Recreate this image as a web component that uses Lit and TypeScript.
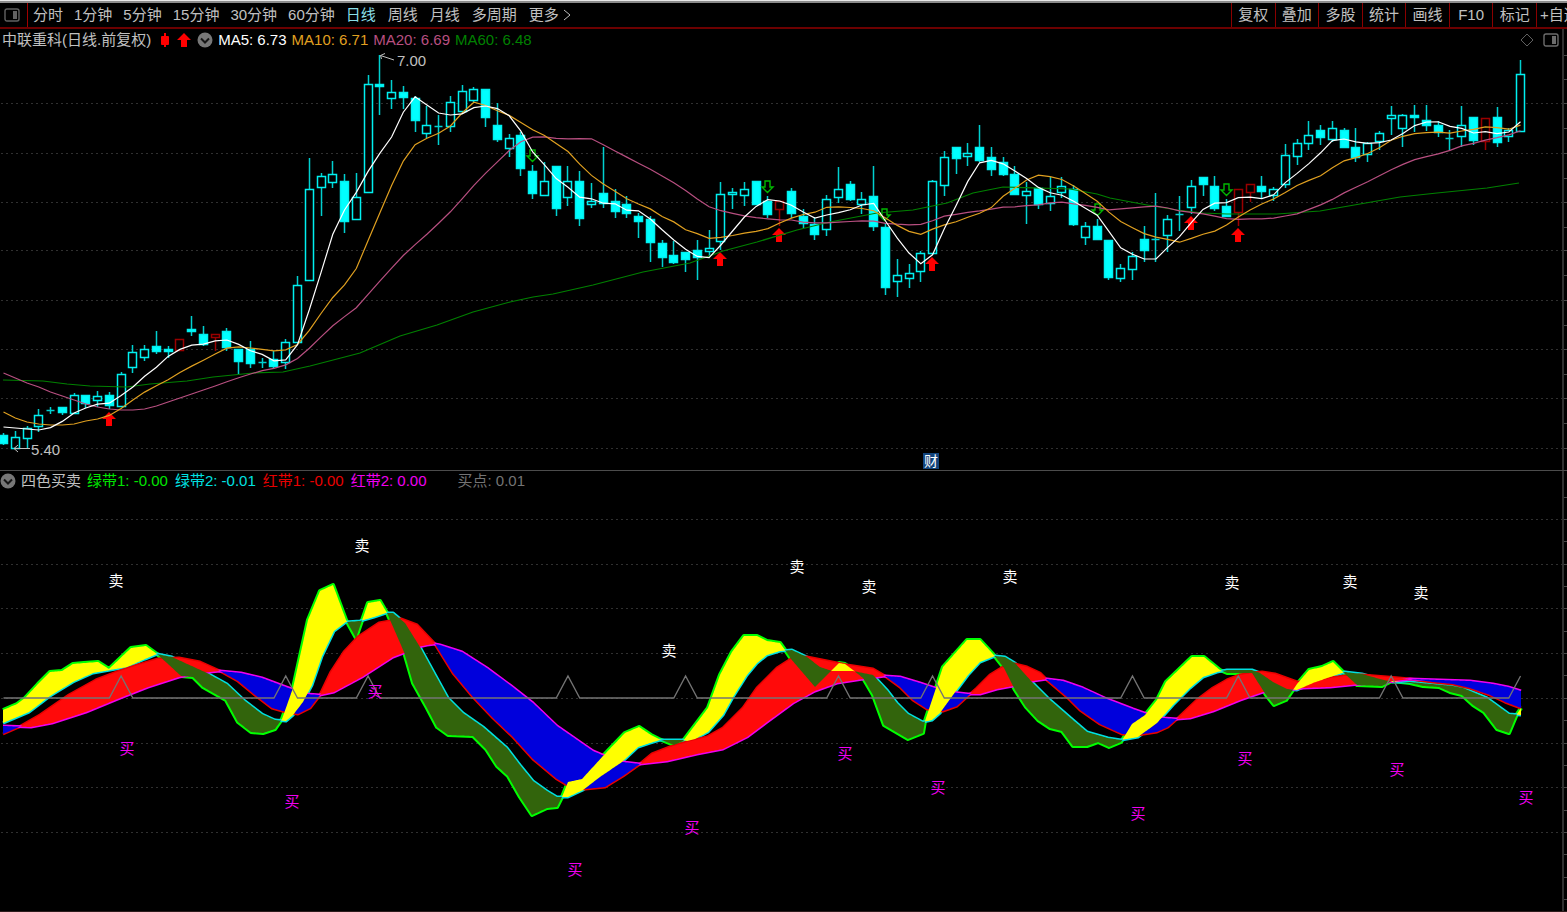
import { LitElement, html, svg, css } from "lit";
import { customElement, property, state } from "lit/decorators.js";

type Pt = [number, number];
type Kind = "u" | "d" | "r" | "c";
// high, body top, body bottom, low, kind (u rising, d falling, r signal, c doji)
type Candle = [number, number, number, number, Kind];

const X0 = 3.5;
const STEP = 11.76;
const xAt = (i: number) => X0 + i * STEP;
const snap = (v: number) => Math.round(v - 0.5) + 0.5;

const CANDLES: Candle[] = [
  [433, 435, 443, 445, "d"], [431, 437, 448, 448, "u"], [426, 428, 438, 448, "u"], [409, 415, 426, 432, "u"],
  [407, 410, 410, 414, "c"], [407, 407, 412, 415, "d"], [393, 395, 413, 414, "u"], [395, 395, 403, 408, "d"],
  [391, 396, 400, 407, "u"], [392, 395, 405, 409, "d"], [372, 374, 406, 407, "u"], [345, 352, 367, 373, "u"],
  [345, 349, 357, 361, "u"], [331, 346, 351, 354, "d"], [346, 349, 351, 358, "d"], [339, 339, 350, 350, "r"],
  [316, 329, 331, 336, "d"], [326, 334, 344, 346, "d"], [334, 334, 337, 351, "r"], [328, 331, 347, 351, "d"],
  [349, 349, 361, 374, "d"], [341, 349, 363, 368, "d"], [358, 362, 362, 368, "c"], [351, 359, 366, 368, "d"],
  [339, 342, 362, 369, "u"], [276, 285, 342, 342, "u"], [158, 189, 280, 280, "u"], [173, 176, 187, 216, "u"],
  [161, 174, 182, 188, "u"], [174, 181, 221, 233, "d"], [173, 197, 219, 219, "u"], [75, 84, 192, 193, "u"],
  [55, 84, 86, 115, "d"], [80, 92, 98, 109, "u"], [86, 92, 97, 109, "d"], [96, 98, 120, 132, "d"],
  [106, 125, 133, 138, "u"], [115, 126, 126, 145, "c"], [96, 102, 126, 132, "u"], [85, 91, 111, 112, "u"],
  [87, 89, 100, 102, "u"], [89, 89, 117, 127, "d"], [103, 125, 139, 142, "d"], [134, 138, 148, 157, "u"],
  [132, 135, 168, 176, "d"], [165, 171, 193, 199, "d"], [162, 181, 195, 196, "u"], [166, 166, 208, 216, "d"],
  [166, 181, 197, 206, "u"], [171, 181, 218, 226, "d"], [183, 201, 204, 208, "u"], [147, 193, 203, 208, "d"],
  [189, 201, 211, 218, "d"], [196, 204, 213, 218, "d"], [213, 216, 221, 238, "d"], [216, 219, 242, 262, "d"],
  [240, 243, 257, 267, "d"], [241, 255, 262, 264, "d"], [252, 252, 259, 272, "d"], [240, 250, 257, 280, "d"],
  [230, 248, 251, 256, "u"], [182, 194, 241, 250, "u"], [188, 192, 194, 209, "u"], [182, 189, 195, 206, "u"],
  [181, 181, 204, 204, "d"], [196, 201, 214, 218, "d"], [201, 201, 209, 226, "r"], [188, 191, 213, 218, "d"],
  [209, 216, 223, 228, "d"], [217, 224, 234, 240, "d"], [195, 199, 229, 236, "u"], [167, 189, 197, 203, "u"],
  [181, 184, 199, 201, "d"], [192, 199, 204, 214, "u"], [166, 196, 226, 231, "d"], [223, 227, 287, 295, "d"],
  [259, 275, 281, 297, "u"], [264, 273, 278, 288, "u"], [251, 253, 271, 282, "u"], [180, 181, 253, 255, "u"],
  [151, 157, 185, 196, "u"], [147, 147, 158, 174, "d"], [143, 153, 156, 166, "u"], [125, 147, 160, 162, "d"],
  [147, 157, 169, 176, "d"], [157, 162, 174, 176, "d"], [166, 174, 194, 194, "d"], [182, 191, 195, 224, "u"],
  [188, 188, 204, 209, "d"], [177, 196, 203, 211, "u"], [177, 186, 192, 198, "u"], [185, 189, 224, 226, "d"],
  [222, 226, 237, 245, "u"], [219, 226, 239, 239, "d"], [240, 240, 277, 280, "d"], [264, 268, 278, 282, "u"],
  [252, 256, 269, 280, "u"], [226, 239, 250, 262, "d"], [193, 239, 239, 262, "c"], [215, 219, 235, 252, "u"],
  [196, 214, 214, 231, "c"], [180, 186, 207, 214, "u"], [177, 177, 184, 196, "d"], [176, 186, 208, 211, "d"],
  [199, 206, 216, 217, "d"], [189, 189, 212, 226, "r"], [184, 184, 192, 202, "r"], [176, 186, 191, 198, "d"],
  [187, 189, 195, 201, "u"], [144, 155, 184, 188, "u"], [139, 143, 156, 165, "u"], [121, 135, 143, 150, "u"],
  [125, 130, 137, 145, "d"], [121, 128, 139, 142, "u"], [128, 130, 147, 147, "d"], [128, 147, 157, 162, "d"],
  [142, 143, 154, 162, "u"], [131, 133, 141, 150, "u"], [106, 115, 118, 135, "u"], [114, 115, 128, 147, "u"],
  [105, 115, 117, 132, "d"], [105, 120, 125, 131, "d"], [121, 125, 132, 137, "d"], [130, 138, 138, 150, "c"],
  [106, 125, 136, 147, "u"], [117, 117, 140, 145, "d"], [118, 118, 141, 150, "r"], [107, 117, 142, 147, "d"],
  [128, 130, 136, 142, "u"], [60, 74, 131, 132, "u"],
];

const closes = CANDLES.map((c) => (c[4] === "d" ? c[2] : c[1]));

/** Moving average over the closes, with seed values for the days before the window is full. */
function average(n: number, seed: number[]): string {
  const pts: string[] = [];
  for (let i = 0; i < closes.length; i++) {
    const y = i < seed.length ? seed[i] : closes.slice(i - n + 1, i + 1).reduce((a, b) => a + b, 0) / n;
    pts.push(`${xAt(i).toFixed(1)},${(y + 1).toFixed(1)}`);
  }
  return pts.join(" ");
}

const MA5 = average(5, [426, 427, 428, 429]);
const MA10 = average(10, [411, 417, 421, 423, 424, 424, 423, 420, 418]);
const MA20 = average(20, [372, 377, 382, 386, 391, 395, 399, 403, 406, 408, 409, 409, 408, 405, 401, 397, 393, 389, 385]);
const MA60: Pt[] = [
  [3, 380], [43, 381], [67, 384], [90, 386], [127, 387], [150, 384], [187, 381], [213, 377], [253, 373], [283, 372],
  [310, 366], [337, 359], [360, 353], [400, 336], [437, 325], [473, 312], [510, 302], [533, 297], [553, 294],
  [593, 285], [643, 272], [690, 263], [723, 251], [757, 242], [797, 230], [830, 222], [877, 213], [913, 210],
  [947, 203], [973, 193], [1003, 187], [1070, 189], [1097, 194], [1110, 198], [1147, 205], [1177, 210], [1203, 213],
  [1227, 214], [1277, 214], [1320, 211], [1360, 204], [1400, 197], [1437, 193], [1487, 188], [1519, 183],
];

const G1: Pt[] = [
  [3, 710], [17, 704], [25, 698], [38, 684], [50, 672], [62, 671], [73, 664], [84, 663], [98, 662], [109, 669],
  [131, 648], [146, 646], [157, 654], [168, 664], [181, 676], [193, 677], [203, 687], [226, 700], [238, 722],
  [251, 732], [263, 733], [275, 729], [282, 719], [293, 688], [308, 620], [320, 591], [333, 585], [346, 620],
  [356, 638], [368, 603], [380, 601], [387, 613], [404, 652], [413, 683], [427, 708], [437, 727], [448, 735],
  [473, 736], [486, 749], [497, 766], [508, 776], [520, 797], [532, 815], [547, 808], [557, 807], [562, 797],
  [568, 782], [582, 779], [603, 756], [625, 733], [639, 727], [651, 735], [659, 739], [674, 745], [683, 741],
  [708, 708], [720, 675], [732, 652], [744, 636], [757, 636], [767, 641], [780, 643], [785, 650], [791, 659],
  [815, 687], [827, 675], [839, 663], [845, 664], [853, 670], [863, 678], [873, 695], [884, 725], [908, 739],
  [923, 733], [925, 721], [932, 700], [943, 667], [967, 640], [980, 640], [993, 654], [1004, 668], [1015, 690],
  [1026, 707], [1038, 720], [1050, 728], [1062, 731], [1073, 746], [1087, 746], [1098, 742], [1109, 747],
  [1121, 742], [1132, 724], [1145, 715], [1157, 700], [1166, 682], [1192, 657], [1204, 657], [1220, 670],
  [1227, 673], [1252, 673], [1266, 695], [1274, 705], [1286, 700], [1297, 684], [1309, 670], [1322, 667],
  [1333, 662], [1345, 674], [1357, 685], [1382, 686], [1392, 681], [1410, 683], [1423, 686], [1439, 687],
  [1450, 692], [1462, 695], [1473, 705], [1484, 712], [1497, 729], [1509, 733], [1517, 714], [1521, 708],
];
const G2: Pt[] = [
  [3, 723], [29, 712], [50, 696], [73, 682], [93, 673], [110, 670], [127, 667], [145, 659], [157, 654], [172, 657],
  [207, 673], [227, 684], [245, 701], [262, 714], [275, 720], [286, 721], [293, 715], [303, 702], [312, 685],
  [322, 656], [334, 631], [346, 622], [360, 621], [374, 617], [386, 613], [393, 613], [405, 623], [420, 647],
  [437, 678], [448, 698], [463, 713], [483, 727], [507, 748], [520, 765], [533, 781], [547, 791], [557, 797],
  [568, 797], [583, 790], [600, 777], [622, 762], [638, 747], [650, 743], [660, 740], [683, 740], [687, 741],
  [695, 739], [708, 732], [723, 715], [733, 697], [747, 675], [757, 663], [767, 655], [780, 651], [792, 650],
  [807, 657], [820, 667], [832, 671], [853, 671], [873, 675], [887, 690], [897, 703], [908, 714], [923, 722],
  [932, 720], [940, 713], [953, 695], [968, 675], [980, 662], [995, 656], [1005, 657], [1015, 663], [1032, 682],
  [1050, 700], [1073, 720], [1087, 732], [1108, 738], [1121, 740], [1138, 737], [1157, 723], [1173, 705],
  [1190, 688], [1203, 677], [1217, 672], [1227, 670], [1252, 670], [1260, 673], [1273, 682], [1287, 689],
  [1297, 690], [1313, 683], [1333, 676], [1345, 672], [1362, 674], [1380, 679], [1393, 682], [1410, 682],
  [1453, 686], [1463, 688], [1487, 698], [1509, 714], [1521, 715],
];
const R1: Pt[] = [
  [3, 734], [19, 727], [40, 715], [69, 695], [96, 680], [117, 672], [138, 665], [158, 659], [179, 658], [200, 662],
  [220, 671], [238, 681], [255, 695], [272, 708], [286, 712], [298, 714], [310, 708], [320, 695], [331, 672],
  [344, 652], [358, 637], [379, 623], [401, 619], [417, 625], [435, 644], [453, 673], [473, 697], [493, 718],
  [513, 737], [533, 759], [557, 779], [567, 785], [585, 789], [605, 787], [623, 776], [640, 764], [652, 754],
  [670, 747], [687, 742], [707, 737], [723, 728], [743, 708], [757, 688], [777, 668], [791, 659], [807, 657],
  [827, 661], [847, 665], [873, 669], [885, 676], [900, 687], [913, 700], [927, 709], [943, 711], [957, 706],
  [968, 696], [977, 688], [990, 675], [1003, 667], [1015, 664], [1027, 667], [1040, 673], [1047, 680],
  [1067, 697], [1080, 710], [1100, 724], [1122, 734], [1137, 735], [1157, 732], [1168, 727], [1177, 719],
  [1197, 700], [1213, 688], [1227, 680], [1240, 675], [1252, 673], [1262, 672], [1275, 674], [1297, 682],
  [1313, 682], [1330, 678], [1345, 676], [1362, 675], [1387, 677], [1410, 679], [1433, 682], [1453, 684],
  [1470, 688], [1490, 695], [1505, 702], [1521, 708],
];
const R2: Pt[] = [
  [3, 726], [31, 727], [52, 723], [86, 712], [120, 698], [148, 687], [179, 677], [200, 673], [220, 671],
  [241, 673], [262, 678], [286, 687], [306, 694], [320, 695], [334, 692], [362, 677], [393, 657], [406, 652],
  [418, 647], [427, 645], [435, 644], [440, 645], [462, 652], [487, 668], [510, 685], [533, 703], [557, 726],
  [580, 742], [593, 751], [607, 757], [623, 762], [640, 764], [667, 761], [697, 754], [723, 749], [747, 737],
  [767, 722], [793, 703], [815, 691], [837, 683], [863, 679], [885, 676], [900, 677], [920, 683], [935, 688],
  [950, 692], [968, 694], [980, 694], [997, 689], [1013, 686], [1033, 681], [1047, 679], [1063, 681],
  [1083, 688], [1107, 699], [1133, 709], [1147, 714], [1163, 718], [1177, 719], [1190, 718], [1213, 711],
  [1240, 700], [1263, 692], [1280, 691], [1303, 688], [1330, 687], [1360, 684], [1387, 682], [1410, 679],
  [1440, 680], [1470, 681], [1493, 684], [1508, 687], [1521, 691],
];

function sample(line: Pt[]): number[] {
  const out: number[] = [];
  let k = 0;
  for (let x = 3; x <= 1521; x++) {
    while (k < line.length - 2 && line[k + 1][0] < x) k++;
    const [xa, ya] = line[k];
    const [xb, yb] = line[k + 1];
    out.push(ya + ((yb - ya) * (x - xa)) / (xb - xa));
  }
  return out;
}

/** Area between two lines, only where the first lies on the side that `pick` selects. */
function band(a: Pt[], b: Pt[], pick: (p: number, q: number) => number): string {
  const sa = sample(a);
  const sb = sample(b);
  const there = sa.map((v, i) => `${i + 3},${pick(v, sb[i]).toFixed(1)}`);
  const back = sb.map((v, i) => `${i + 3},${v.toFixed(1)}`).reverse();
  return there.concat(back).join(" ");
}

const join = (pts: Pt[]) => pts.map((p) => p.join(",")).join(" ");

const BUY_POINTS = [10, 24, 31, 48, 58, 71, 79, 96, 105, 118];
const buyLine = () => {
  const pts = [`${X0},698`];
  for (const i of BUY_POINTS) pts.push(`${xAt(i - 1)},698`, `${xAt(i)},676`, `${xAt(i + 1)},698`);
  pts.push(`${xAt(128)},698`, `${xAt(129)},676`);
  return pts.join(" ");
};

const SELL: Pt[] = [[116, 581], [362, 546], [669, 651], [797, 567], [869, 587], [1010, 577], [1232, 583], [1350, 582], [1421, 593]];
const BUY: Pt[] = [
  [127, 749], [292, 802], [375, 692], [575, 870], [692, 828], [845, 754], [938, 788], [1138, 814], [1245, 759], [1397, 770], [1526, 798],
];
const UP: Pt[] = [[109, 412], [720, 252], [779, 228], [932, 257], [1191, 216], [1238, 228]];
const DOWN: Pt[] = [[532, 149], [767, 180], [884, 208], [1097, 203], [1226, 183]];

const PRICE_GRID = [103, 153, 202, 250, 300, 349, 398, 448];
const PRICE_TICKS = [55, 79, 103, 128, 153, 178, 202, 227, 250, 275, 300, 325, 349, 374, 398, 423, 448];
const BAND_GRID = [519, 564, 608, 653, 698, 743, 787, 832];
const BAND_TICKS = [497, 519, 541, 564, 586, 608, 631, 653, 675, 698, 720, 743, 765, 787, 810, 832, 854, 877, 899];

const grid = (rows: number[]) =>
  rows.map((y) => svg`<line class="grid" x1="1" x2="1562" y1=${y + 0.5} y2=${y + 0.5}></line>`);

const shared = css`
  :host {
    display: block;
    font-family: "Liberation Sans", "Noto Sans CJK SC", sans-serif;
    font-size: 15px;
    font-weight: 400;
    line-height: 20px;
    color: #c0c0c0;
  }
  svg {
    display: block;
  }
  .panel {
    display: grid;
    grid-template-columns: minmax(0, 1fr) 5px;
  }
  .head {
    display: flex;
    align-items: center;
    white-space: nowrap;
    height: 23px;
    padding-bottom: 2px;
    box-sizing: border-box;
  }
  .plot {
    width: 100%;
    height: auto;
  }
  .axis {
    position: relative;
    border-left: 2px solid #303030;
  }
  .axis svg {
    position: absolute;
    inset: 0;
    width: 100%;
    height: 100%;
  }
  .axis line {
    stroke: #484848;
  }
  .grid {
    stroke: #303030;
    stroke-width: 1;
    stroke-dasharray: 2 3;
  }
  .fold {
    display: flex;
    padding: 0;
    border: 0;
    background: none;
  }
  text {
    font-size: 15px;
  }
`;

const foldIcon = html`<svg width="16" height="16" viewBox="0 0 16 16">
  <circle cx="8" cy="8" r="7.5" fill="#777"></circle>
  <path d="M4 6.5 8 10.5 12 6.5" fill="none" stroke="#151515" stroke-width="2"></path>
</svg>`;

@customElement("period-bar")
class PeriodBar extends LitElement {
  @state() private active = "日线";

  static styles = [
    shared,
    css`
      .bar {
        display: flex;
        justify-content: space-between;
        height: 24px;
        border-top: 2px solid #8c8c8c;
        border-bottom: 2px solid #6c0000;
      }
      .edge {
        height: 1px;
        background: #e8e8e8;
      }
      button {
        font: inherit;
        color: inherit;
        background: none;
        border: 0;
        padding: 0;
        white-space: nowrap;
      }
      .left,
      .group {
        display: flex;
        align-items: center;
      }
      .toggle {
        display: flex;
        align-items: center;
        align-self: stretch;
        width: 28px;
        padding-left: 4px;
        box-sizing: border-box;
        border-right: 1px solid #a00000;
        margin-right: 5px;
      }
      .minutes {
        gap: 11px;
        margin-right: 11px;
      }
      .days {
        gap: 12px;
      }
      .on {
        color: #8adfe8;
      }
      .more {
        display: flex;
        align-items: center;
        gap: 4px;
      }
      .actions {
        display: grid;
        grid-template-columns: repeat(7, 1fr) 31px;
        width: 336px;
        flex: none;
        overflow: hidden;
      }
      .actions button {
        border-left: 1px solid #8a0000;
      }
      .actions .add {
        padding-left: 3px;
        text-align: left;
      }
    `,
  ];

  private item(label: string) {
    return html`<button class=${label === this.active ? "on" : ""} @click=${() => (this.active = label)}>${label}</button>`;
  }

  render() {
    return html`
      <div class="edge"></div>
      <nav class="bar">
        <div class="left">
          <button class="toggle" aria-label="侧栏">
            <svg width="16" height="14" viewBox="0 0 16 14">
              <rect x="1" y="1" width="14" height="12" rx="2" fill="none" stroke="#626262" stroke-width="1.4"></rect>
              <rect x="9" y="3" width="4" height="8" fill="#626262"></rect>
            </svg>
          </button>
          <div class="group minutes">${["分时", "1分钟", "5分钟", "15分钟", "30分钟", "60分钟"].map((t) => this.item(t))}</div>
          <div class="group days">
            ${["日线", "周线", "月线", "多周期"].map((t) => this.item(t))}
            <button class="more">
              更多
              <svg width="8" height="12" viewBox="0 0 8 12"><path d="M1 1 7 6 1 11" fill="none" stroke="#c0c0c0"></path></svg>
            </button>
          </div>
        </div>
        <div class="actions">
          ${["复权", "叠加", "多股", "统计", "画线", "F10", "标记"].map((t) => html`<button>${t}</button>`)}
          <button class="add">+自选</button>
        </div>
      </nav>
    `;
  }
}

@customElement("price-panel")
class PricePanel extends LitElement {
  @property({ type: Array }) candles: Candle[] = CANDLES;

  static styles = [
    shared,
    css`
      .title {
        padding-left: 2px;
      }
      .marks {
        display: flex;
        align-items: center;
        gap: 6px;
        margin: 0 5px 0 8px;
      }
      .values {
        display: flex;
        gap: 5px;
        flex: 1;
      }
      .tools {
        display: flex;
        gap: 8px;
        padding-right: 3px;
      }
      .ma5 {
        color: #fff;
      }
      .ma10 {
        color: #e0a020;
      }
      .ma20 {
        color: #b84f80;
      }
      .ma60 {
        color: #008000;
      }
      .line {
        fill: none;
        stroke: currentColor;
        stroke-width: 1.2;
      }
      .candle {
        stroke: #00f0f0;
        stroke-width: 1.5;
        fill: #000;
      }
      .wick {
        stroke: #00d0d0;
      }
      .solid {
        fill: #00ffff;
      }
      .signal {
        stroke: #9a0000;
      }
      .up {
        fill: #ff0000;
      }
      .down {
        fill: none;
        stroke: #00b800;
        stroke-width: 1.4;
      }
      .note {
        fill: #c0c0c0;
      }
      .pointer {
        fill: none;
        stroke: #c0c0c0;
      }
      .badge {
        fill: #12447c;
      }
      .badge-text {
        fill: #fff;
        font-size: 14px;
        text-anchor: middle;
      }
    `,
  ];

  private candle([high, top, bottom, low, kind]: Candle, i: number) {
    const x = snap(xAt(i));
    const tone = kind === "r" ? "signal" : "";
    if (kind === "c")
      return svg`<path class="candle wick" d="M${x} ${high}V${low}M${x - 4} ${top + 0.5}H${x + 4}"></path>`;
    return svg`
      <path class="candle wick ${tone}" d="M${x} ${high}V${top}M${x} ${bottom}V${low}"></path>
      <rect class="candle ${tone} ${kind === "d" ? "solid" : ""}" x=${x - 4} y=${top + 0.5} width="8" height=${bottom - top}></rect>`;
  }

  render() {
    return html`
      <section class="panel">
        <div>
          <header class="head">
            <span class="title">中联重科(日线.前复权)</span>
            <span class="marks">
              <svg width="12" height="16" viewBox="0 0 12 16">
                <path d="M6 1V15" stroke="#f00" stroke-width="2"></path>
                <rect x="2" y="4" width="8" height="9" rx="1" fill="#f00"></rect>
              </svg>
              <svg width="14" height="14" viewBox="0 0 14 14"><path d="M7 0 14 7H10V14H4V7H0Z" fill="#f00"></path></svg>
              <button class="fold" aria-label="主图指标">${foldIcon}</button>
            </span>
            <span class="values">
              <span class="ma5">MA5: 6.73</span>
              <span class="ma10">MA10: 6.71</span>
              <span class="ma20">MA20: 6.69</span>
              <span class="ma60">MA60: 6.48</span>
            </span>
            <span class="tools">
              <svg width="16" height="16" viewBox="0 0 16 16"><path d="M8 2 14 8 8 14 2 8Z" fill="none" stroke="#606060"></path></svg>
              <svg width="16" height="16" viewBox="0 0 16 16">
                <rect x="1" y="2" width="14" height="12" rx="2" fill="none" stroke="#6c6c6c" stroke-width="1.4"></rect>
                <rect x="9" y="4" width="4" height="8" fill="#6c6c6c"></rect>
              </svg>
            </span>
          </header>
          <svg class="plot" viewBox="0 52 1562 418" role="img" aria-label="日线K线图">
            ${grid(PRICE_GRID)} ${this.candles.map((c, i) => this.candle(c, i))}
            ${UP.map(([x, y]) => svg`<path class="up" d="M${x} ${y}l7 7h-4v7h-6v-7h-4Z"></path>`)}
            ${DOWN.map(([x, y]) => svg`<path class="down" d="M${x - 2} ${y + 1}h5v6h3l-5.500 5.500l-5.500 -5.500h3Z"></path>`)}
            <polyline class="line ma60" points=${join(MA60)}></polyline>
            <polyline class="line ma20" points=${MA20}></polyline>
            <polyline class="line ma10" points=${MA10}></polyline>
            <polyline class="line ma5" points=${MA5}></polyline>
            <path class="pointer" d="M380.500 55.500 394 60M385 53.500 380.500 55.500 381.500 59"></path>
            <text class="note" x="397" y="66">7.00</text>
            <path class="pointer" d="M14 448.500H30M18 445 14 448.500 18 452"></path>
            <text class="note" x="31" y="455">5.40</text>
            <rect class="badge" x="923" y="453" width="16" height="16"></rect>
            <text class="badge-text" x="931" y="466">财</text>
          </svg>
        </div>
        <div class="axis">
          <svg viewBox="0 29 3 441" preserveAspectRatio="none">
            ${PRICE_TICKS.map((y) => svg`<line x1="0" x2="3" y1=${y + 0.5} y2=${y + 0.5}></line>`)}
          </svg>
        </div>
      </section>
    `;
  }
}

@customElement("band-panel")
class BandPanel extends LitElement {
  static styles = [
    shared,
    css`
      .panel {
        border-top: 1px solid #4c4c4c;
        border-bottom: 1px solid #2c1c1c;
      }
      .head {
        gap: 6px;
        height: 22px;
      }
      .title {
        margin-left: -1px;
      }
      .values {
        display: flex;
        gap: 7px;
      }
      .g1 {
        color: #00e400;
      }
      .g2 {
        color: #00e0e0;
      }
      .r1 {
        color: #e80000;
      }
      .r2 {
        color: #f000f0;
      }
      .point {
        color: #747474;
        margin-left: 25px;
      }
      .line {
        fill: none;
        stroke: currentColor;
        stroke-width: 3;
        stroke-linejoin: round;
      }
      .thick {
        stroke-width: 4;
        color: #00ff00;
      }
      .yellow {
        fill: #ffff00;
      }
      .olive {
        fill: #32640c;
      }
      .red {
        fill: #ff0a0a;
      }
      .blue {
        fill: #0000dc;
      }
      .buy-line {
        fill: none;
        stroke: #747474;
        stroke-width: 1.3;
      }
      .sell,
      .buy {
        fill: #fff;
        text-anchor: middle;
      }
      .buy {
        fill: #f000f0;
      }
    `,
  ];

  render() {
    return html`
      <section class="panel">
        <div>
          <header class="head">
            <button class="fold" aria-label="副图指标">${foldIcon}</button>
            <span class="title">四色买卖</span>
            <span class="values">
              <span class="g1">绿带1: -0.00</span>
              <span class="g2">绿带2: -0.01</span>
              <span class="r1">红带1: -0.00</span>
              <span class="r2">红带2: 0.00</span>
            </span>
            <span class="point">买点: 0.01</span>
          </header>
          <svg class="plot" viewBox="0 493 1562 418" role="img" aria-label="四色买卖指标图">
            ${grid(BAND_GRID)}
            <polyline class="line thick" points=${join(G1)}></polyline>
            <polyline class="line g2" points=${join(G2)}></polyline>
            <polyline class="line r1" points=${join(R1)}></polyline>
            <polyline class="line r2" points=${join(R2)}></polyline>
            <polygon class="red" points=${band(R1, R2, Math.min)}></polygon>
            <polygon class="blue" points=${band(R1, R2, Math.max)}></polygon>
            <polygon class="yellow" points=${band(G1, G2, Math.min)}></polygon>
            <polygon class="olive" points=${band(G1, G2, Math.max)}></polygon>
            <polyline class="buy-line" points=${buyLine()}></polyline>
            ${SELL.map(([x, y]) => svg`<text class="sell" x=${x} y=${y + 5}>卖</text>`)}
            ${BUY.map(([x, y]) => svg`<text class="buy" x=${x} y=${y + 5}>买</text>`)}
          </svg>
        </div>
        <div class="axis">
          <svg viewBox="0 471 3 440" preserveAspectRatio="none">
            ${BAND_TICKS.map((y) => svg`<line x1="0" x2="3" y1=${y + 0.5} y2=${y + 0.5}></line>`)}
          </svg>
        </div>
      </section>
    `;
  }
}

@customElement("app-root")
class AppRoot extends LitElement {
  static styles = css`
    :host {
      display: block;
      min-height: 100vh;
      background: #000;
      overflow: hidden;
    }
  `;

  render() {
    return html`
      <period-bar></period-bar>
      <price-panel></price-panel>
      <band-panel></band-panel>
    `;
  }
}
